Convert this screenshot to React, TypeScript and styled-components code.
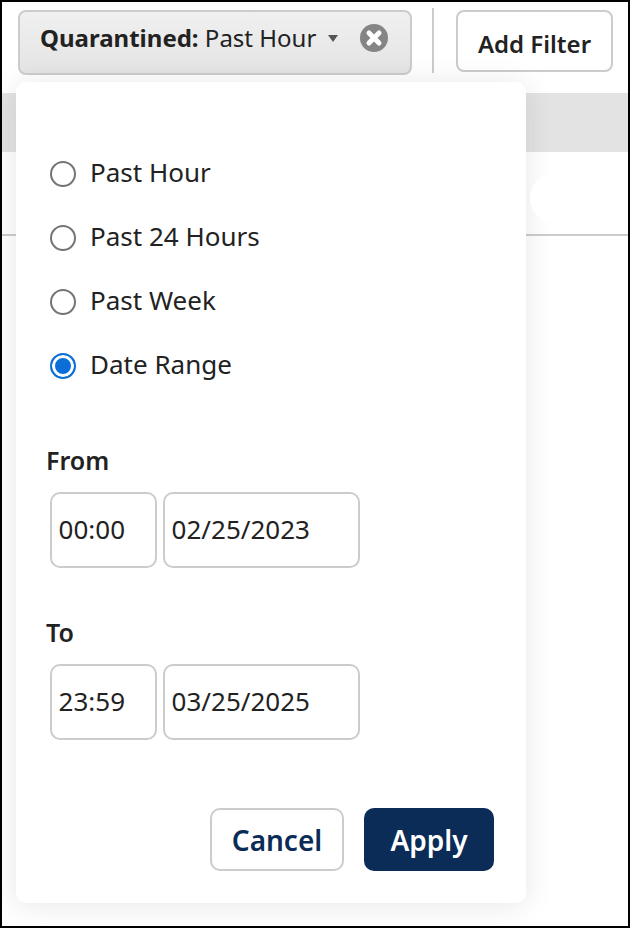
import React from 'react';
import styled, { createGlobalStyle } from 'styled-components';

const GlobalStyle = createGlobalStyle`
  html, body {
    margin: 0;
    padding: 0;
    background: #fff;
    font-family: "Noto Sans", "Open Sans", sans-serif;
    color: #222;
  }
`;

const rangeOptions = [
  { label: 'Past Hour', checked: false },
  { label: 'Past 24 Hours', checked: false },
  { label: 'Past Week', checked: false },
  { label: 'Date Range', checked: true },
];

const dateGroups = [
  { label: 'From', time: '00:00', date: '02/25/2023' },
  { label: 'To', time: '23:59', date: '03/25/2025' },
];

const App = () => (
  <>
    <GlobalStyle />
    <Frame>
      <Toolbar>
        <FilterChip>
          <ChipText>
            <strong>Quarantined:</strong> Past Hour
          </ChipText>
          <Caret />
          <ClearIcon viewBox="0 0 28 28">
            <circle cx="14" cy="14" r="14" fill="#858585" />
            <path d="M9 9l10 10M19 9L9 19" stroke="#fff" strokeWidth="5" strokeLinecap="round" />
          </ClearIcon>
        </FilterChip>
        <Divider />
        <AddFilter>Add Filter</AddFilter>
      </Toolbar>
      <Band />
      <Strip>
        <Pill />
      </Strip>

      <Popover>
        <RadioList>
          {rangeOptions.map(({ label, checked }) => (
            <RadioRow key={label}>
              <RadioMark $checked={checked} />
              {label}
            </RadioRow>
          ))}
        </RadioList>
        {dateGroups.map(({ label, time, date }) => (
          <DateGroup key={label}>
            <GroupLabel>{label}</GroupLabel>
            <Fields>
              <Field $width={107}>{time}</Field>
              <Field $width={197}>{date}</Field>
            </Fields>
          </DateGroup>
        ))}
        <Actions>
          <CancelButton>Cancel</CancelButton>
          <ApplyButton>Apply</ApplyButton>
        </Actions>
      </Popover>
    </Frame>
  </>
);

const Frame = styled.div`
  position: relative;
  box-sizing: border-box;
  width: 630px;
  height: 928px;
  border: 2px solid #000;
  overflow: hidden;
`;

const Toolbar = styled.div`
  display: flex;
  align-items: flex-start;
  height: 91px;
  padding: 8px 0 0 16px;
  box-sizing: border-box;
`;

const FilterChip = styled.div`
  box-sizing: border-box;
  display: flex;
  align-items: flex-start;
  width: 394px;
  height: 65px;
  padding: 9px 0 0 20px;
  border: 2px solid #ccc;
  border-radius: 8px;
  background: linear-gradient(#f0f0f0, #e4e4e4);
`;

const ChipText = styled.span`
  font-size: 24px;
  line-height: 34px;
  white-space: nowrap;

  strong {
    font-weight: 700;
  }
`;

const Caret = styled.span`
  width: 0;
  height: 0;
  margin: 14px 0 0 12px;
  border-left: 5px solid transparent;
  border-right: 5px solid transparent;
  border-top: 7px solid #555;
`;

const ClearIcon = styled.svg`
  width: 28px;
  height: 28px;
  margin: 3px 22px 0 auto;
`;

const Divider = styled.div`
  width: 2px;
  height: 65px;
  margin: -2px 22px 0 20px;
  background: #ccc;
`;

const AddFilter = styled.button`
  box-sizing: border-box;
  width: 157px;
  height: 62px;
  padding: 4px 0 0;
  border: 2px solid #ccc;
  border-radius: 8px;
  background: #fff;
  font: 600 24px "Noto Sans", sans-serif;
  color: #222;
`;

const Band = styled.div`
  height: 59px;
  background: #e3e3e3;
`;

const Strip = styled.div`
  box-sizing: border-box;
  display: flex;
  justify-content: flex-end;
  height: 84px;
  padding-top: 21px;
  border-bottom: 2px solid #ccc;
`;

const Pill = styled.div`
  position: relative;
  z-index: 2;
  width: 98px;
  height: 50px;
  border-radius: 25px 0 0 25px;
  background: #fff;
`;

const Popover = styled.div`
  position: absolute;
  top: 80px;
  left: 14px;
  box-sizing: border-box;
  width: 510px;
  height: 821px;
  padding: 70px 32px 0 30px;
  border-radius: 10px;
  background: #fff;
  box-shadow: 0 2px 30px rgba(0, 0, 0, 0.1);
`;

const RadioList = styled.div`
  display: flex;
  flex-direction: column;
  gap: 24px;
  margin-bottom: 58px;
`;

const RadioRow = styled.label`
  display: flex;
  align-items: center;
  gap: 14px;
  height: 40px;
  padding-left: 4px;
  font-size: 26px;
  line-height: 40px;
`;

const RadioMark = styled.span<{ $checked: boolean }>`
  box-sizing: border-box;
  flex: none;
  width: 26px;
  height: 26px;
  margin-top: 4px;
  border-radius: 50%;
  border: 2px solid ${({ $checked }) => ($checked ? '#0b6fd8' : '#757575')};
  background: ${({ $checked }) => ($checked ? '#0b6fd8' : '#fff')};
  box-shadow: ${({ $checked }) => ($checked ? 'inset 0 0 0 3px #fff' : 'none')};
`;

const DateGroup = styled.div`
  margin-bottom: 46px;
`;

const GroupLabel = styled.div`
  font-size: 25px;
  font-weight: 600;
  line-height: 36px;
  margin-bottom: 14px;
`;

const Fields = styled.div`
  display: flex;
  gap: 6px;
  padding-left: 4px;
`;

const Field = styled.div<{ $width: number }>`
  box-sizing: border-box;
  width: ${({ $width }) => $width}px;
  height: 76px;
  padding-left: 6.6px;
  border: 2px solid #ccc;
  border-radius: 10px;
  font-size: 26px;
  line-height: 70px;
`;

const Actions = styled.div`
  display: flex;
  justify-content: flex-end;
  gap: 20px;
  margin-top: 68px;
`;

const CancelButton = styled.button`
  box-sizing: border-box;
  width: 134px;
  height: 63px;
  border: 2px solid #ccc;
  border-radius: 10px;
  background: #fff;
  font: 600 28px "Noto Sans", sans-serif;
  color: #0a2c57;
`;

const ApplyButton = styled.button`
  box-sizing: border-box;
  width: 130px;
  height: 63px;
  border: none;
  border-radius: 10px;
  background: #0a2c57;
  font: 600 28px "Noto Sans", sans-serif;
  color: #fff;
`;

export default App;
